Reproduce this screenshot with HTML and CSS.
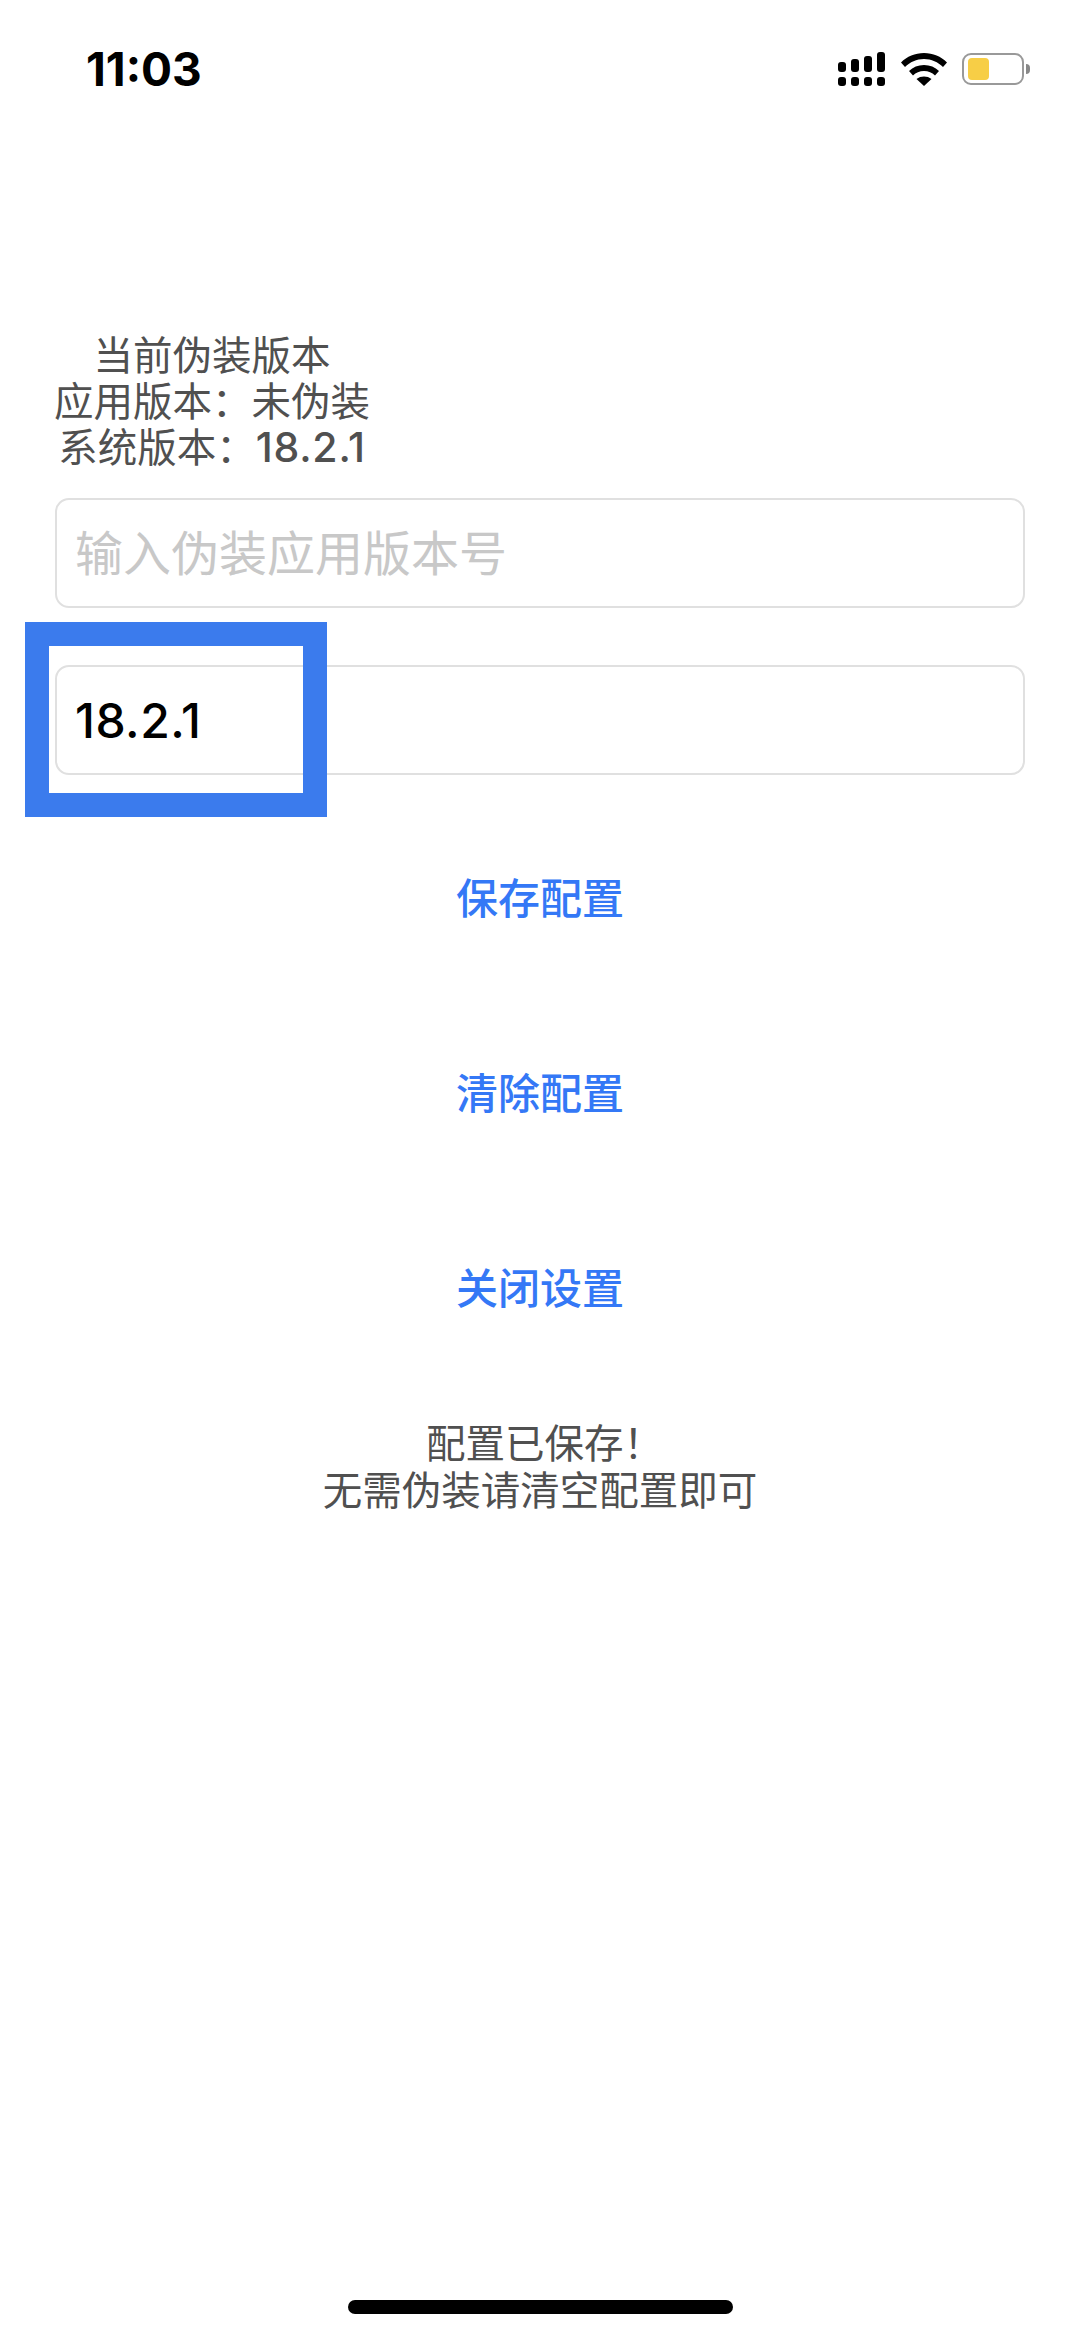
FILE: index.html
```html
<!DOCTYPE html>
<html lang="zh-CN">
<head>
  <meta charset="UTF-8">
  <meta name="viewport" content="width=device-width, initial-scale=1.0">
  <title>伪装版本设置</title>
  <link rel="stylesheet" href="styles.css">
</head>
<body>
  <div class="status-bar">
    <span class="time">11:03</span>
    <div class="status-icons">
      <svg class="signal" width="48" height="34" viewBox="0 0 48 34">
        <rect x="0" y="10" width="8" height="10" rx="3"/>
        <rect x="13" y="7" width="8" height="13" rx="3"/>
        <rect x="26" y="4" width="8" height="16" rx="3"/>
        <rect x="39" y="0" width="8" height="20" rx="3"/>
        <rect x="0" y="25" width="8" height="9" rx="3"/>
        <rect x="13" y="25" width="8" height="9" rx="3"/>
        <rect x="26" y="25" width="8" height="9" rx="3"/>
        <rect x="39" y="25" width="8" height="9" rx="3"/>
      </svg>
      <svg class="wifi" width="46" height="33" viewBox="0 0 46 33">
        <path d="M0 9.500C6 3.500 14 0 23 0S40 3.500 46 9.500L42 14C37 9 30.500 6 23 6S9 9 4 14Z"/>
        <path d="M8 18C12 14 17 12 23 12S34 14 38 18L34 22.500C31 19.500 27.500 18 23 18S15 19.500 12 22.500Z"/>
        <path d="M15.500 26C17.500 24.300 20.500 23.500 23 23.500S28.500 24.300 30.500 26L23 33Z"/>
      </svg>
      <div class="battery">
        <div class="battery-body"><div class="battery-level"></div></div>
        <div class="battery-nub"></div>
      </div>
    </div>
  </div>

  <div class="current-info">
    <p>当前伪装版本</p>
    <p>应用版本：未伪装</p>
    <p>系统版本：<span class="num">18.2.1</span></p>
  </div>

  <div class="form">
    <input class="field" type="text" placeholder="输入伪装应用版本号">
    <div class="field-wrap">
      <input class="field" type="text" value="18.2.1">
      <div class="highlight-box"></div>
    </div>
  </div>

  <div class="actions">
    <a href="#" class="action-btn">保存配置</a>
    <a href="#" class="action-btn">清除配置</a>
    <a href="#" class="action-btn">关闭设置</a>
  </div>

  <div class="message">
    <p class="message-title">配置已保存！</p>
    <p>无需伪装请清空配置即可</p>
  </div>

  <div class="home-indicator"></div>
</body>
</html>
```

FILE: styles.css
```css
* {
  margin: 0;
  padding: 0;
  box-sizing: border-box;
  font-family: Inter, "Noto Sans CJK SC", sans-serif;
}

body {
  background-color: #fff;
  color: #505050;
  width: 1080px;
  height: 2337px;
  position: relative;
  overflow: hidden;
}

.status-bar {
  height: 136px;
  padding: 51px 50px 0 86px;
  display: flex;
  justify-content: space-between;
  align-items: flex-start;
}

.time {
  color: #000;
  font-size: 46px;
  font-weight: 700;
  line-height: 36px;
}

.status-icons {
  display: flex;
  align-items: center;
  gap: 15px;
  padding-top: 1px;
}

.battery {
  display: flex;
  align-items: center;
  gap: 2px;
}

.battery-body {
  width: 62px;
  height: 32px;
  border: 2px solid #999;
  border-radius: 9px;
  padding: 3px 4px;
}

.battery-level {
  width: 21px;
  height: 100%;
  background: #f7ce46;
  border-radius: 4px;
}

.battery-nub {
  width: 4px;
  height: 10px;
  background: #888;
  border-radius: 0 4px 4px 0;
}

.current-info {
  width: 424px;
  margin-top: 197px;
  font-size: 39.5px;
  line-height: 46px;
  text-align: center;
}

.num {
  font-size: 41px;
  font-weight: 500;
  letter-spacing: 0.75px;
  line-height: 1;
}

.form {
  margin-top: 27px;
  padding: 0 55px;
  display: flex;
  flex-direction: column;
  gap: 57px;
}

.field-wrap {
  position: relative;
}

.field {
  display: block;
  width: 100%;
  height: 110px;
  padding: 0 18px;
  border: 2px solid #e0e0e0;
  border-radius: 14px;
  background: transparent;
  color: #000;
  font-size: 48px;
  font-weight: 500;
  letter-spacing: 0.5px;
  outline: none;
}

.field::placeholder {
  color: #c8c8c8;
  font-weight: 400;
  letter-spacing: 0;
}

.highlight-box {
  position: absolute;
  left: -30px;
  top: -43px;
  width: 302px;
  height: 195px;
  border: 24px solid #3b7bed;
}

.actions {
  margin-top: 23px;
  display: flex;
  flex-direction: column;
}

.action-btn {
  height: 195px;
  display: flex;
  align-items: center;
  justify-content: center;
  color: #3478f6;
  font-size: 42px;
  font-weight: 500;
  text-decoration: none;
}

.message {
  margin-top: 38px;
  font-size: 39.5px;
  line-height: 47px;
  text-align: center;
}

.message-title {
  padding-left: 9px;
}

.home-indicator {
  position: absolute;
  left: 348px;
  bottom: 23px;
  width: 385px;
  height: 14px;
  background: #000;
  border-radius: 7px;
}
```
